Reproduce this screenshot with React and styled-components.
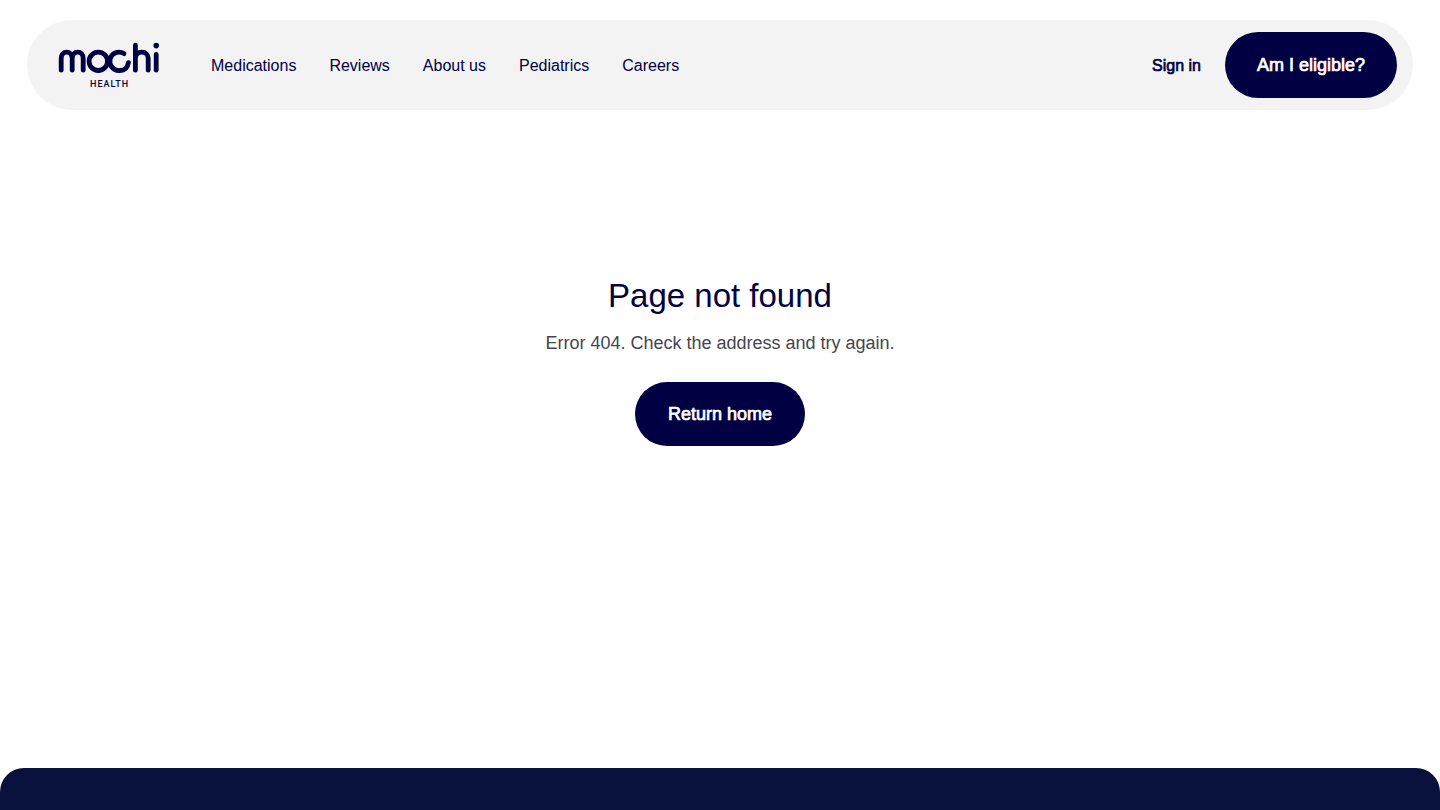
import React from "react";
import styled, { createGlobalStyle, css } from "styled-components";

const NAVY = "#000042";

const links = ["Medications", "Reviews", "About us", "Pediatrics", "Careers"];

function Logo() {
  return (
    <LogoLink href="#" aria-label="mochi health">
      <svg width="102" height="46" viewBox="0 0 102 46" aria-hidden="true">
        <g
          fill="none"
          stroke={NAVY}
          strokeWidth="4.8"
          strokeLinecap="round"
          strokeLinejoin="round"
        >
          <path d="M3.2 28.2V16.4C3.2 12.6 5.4 10.2 8.7 10.2S14.2 12.6 14.2 16.4V28.2M14.2 16.4C14.2 12.6 16.4 10.2 19.7 10.2S25.2 12.6 25.2 16.4V28.2" />
          <circle cx="40.3" cy="19.3" r="9.2" />
          <path d="M66 11.6A9.2 9.2 0 1 0 62 28.5C66.6 28.5 69.6 25.6 70.4 20.6" />
          <path d="M77.4 28.2V3.2M77.4 16.6C77.4 12.6 80 10.2 83.8 10.2S90.2 12.6 90.2 16.6V28.2" />
          <path d="M98.2 12.4V28.2" />
        </g>
        <circle cx="98.2" cy="3.6" r="2.8" fill={NAVY} />
        <text x="32" y="45">
          HEALTH
        </text>
      </svg>
    </LogoLink>
  );
}

export default function App() {
  return (
    <Page>
      <GlobalStyle />
      <Header>
        <Logo />
        <Nav>
          {links.map((label) => (
            <NavLink key={label} href="#">
              {label}
            </NavLink>
          ))}
        </Nav>
        <SignIn href="#">Sign in</SignIn>
        <PillButton $tall>Am I eligible?</PillButton>
      </Header>
      <Main>
        <Title>Page not found</Title>
        <Message>Error 404. Check the address and try again.</Message>
        <PillButton>Return home</PillButton>
      </Main>
      <Footer />
    </Page>
  );
}

const GlobalStyle = createGlobalStyle`
  * {
    box-sizing: border-box;
  }
  body {
    margin: 0;
    background: #fff;
    color: ${NAVY};
    font-family: "Liberation Sans", Arial, sans-serif;
  }
`;

const medium = css`
  -webkit-text-stroke: 0.04em currentColor;
`;

const Page = styled.div`
  display: flex;
  flex-direction: column;
  min-height: 100vh;
`;

const Header = styled.header`
  display: flex;
  align-items: center;
  margin: 20px 27px 0;
  padding: 12px 16px 12px 31px;
  border-radius: 45px;
  background: #f3f3f3;
`;

const LogoLink = styled.a`
  display: flex;

  text {
    fill: ${NAVY};
    font-family: Roboto, sans-serif;
    font-size: 9px;
    font-weight: 500;
    letter-spacing: 1px;
  }
`;

const Nav = styled.nav`
  display: flex;
  flex: 1;
  gap: 33px;
  margin-left: 51px;
`;

const NavLink = styled.a`
  padding-top: 1px;
  color: ${NAVY};
  font-size: 16px;
  line-height: 24px;
  text-decoration: none;
`;

const SignIn = styled(NavLink)`
  ${medium}
  margin-right: 24px;
`;

const PillButton = styled.button`
  ${medium}
  padding: ${(props) => (props.$tall ? "21px 32px" : "20px 33px")};
  border: none;
  border-radius: 33px;
  background: ${NAVY};
  color: #fff;
  font-family: inherit;
  font-size: 18px;
  line-height: 24px;
  cursor: pointer;
`;

const Main = styled.main`
  display: flex;
  flex: 1;
  flex-direction: column;
  align-items: center;
  padding: 164px 24px;
`;

const Title = styled.h1`
  margin: 0;
  font-size: 33px;
  font-weight: normal;
  line-height: 44px;
`;

const Message = styled.p`
  margin: 12px 0 26px;
  color: #45454f;
  font-size: 18px;
  line-height: 26px;
`;

const Footer = styled.footer`
  height: 42px;
  border-radius: 24px 24px 0 0;
  background: #09113d;
`;
